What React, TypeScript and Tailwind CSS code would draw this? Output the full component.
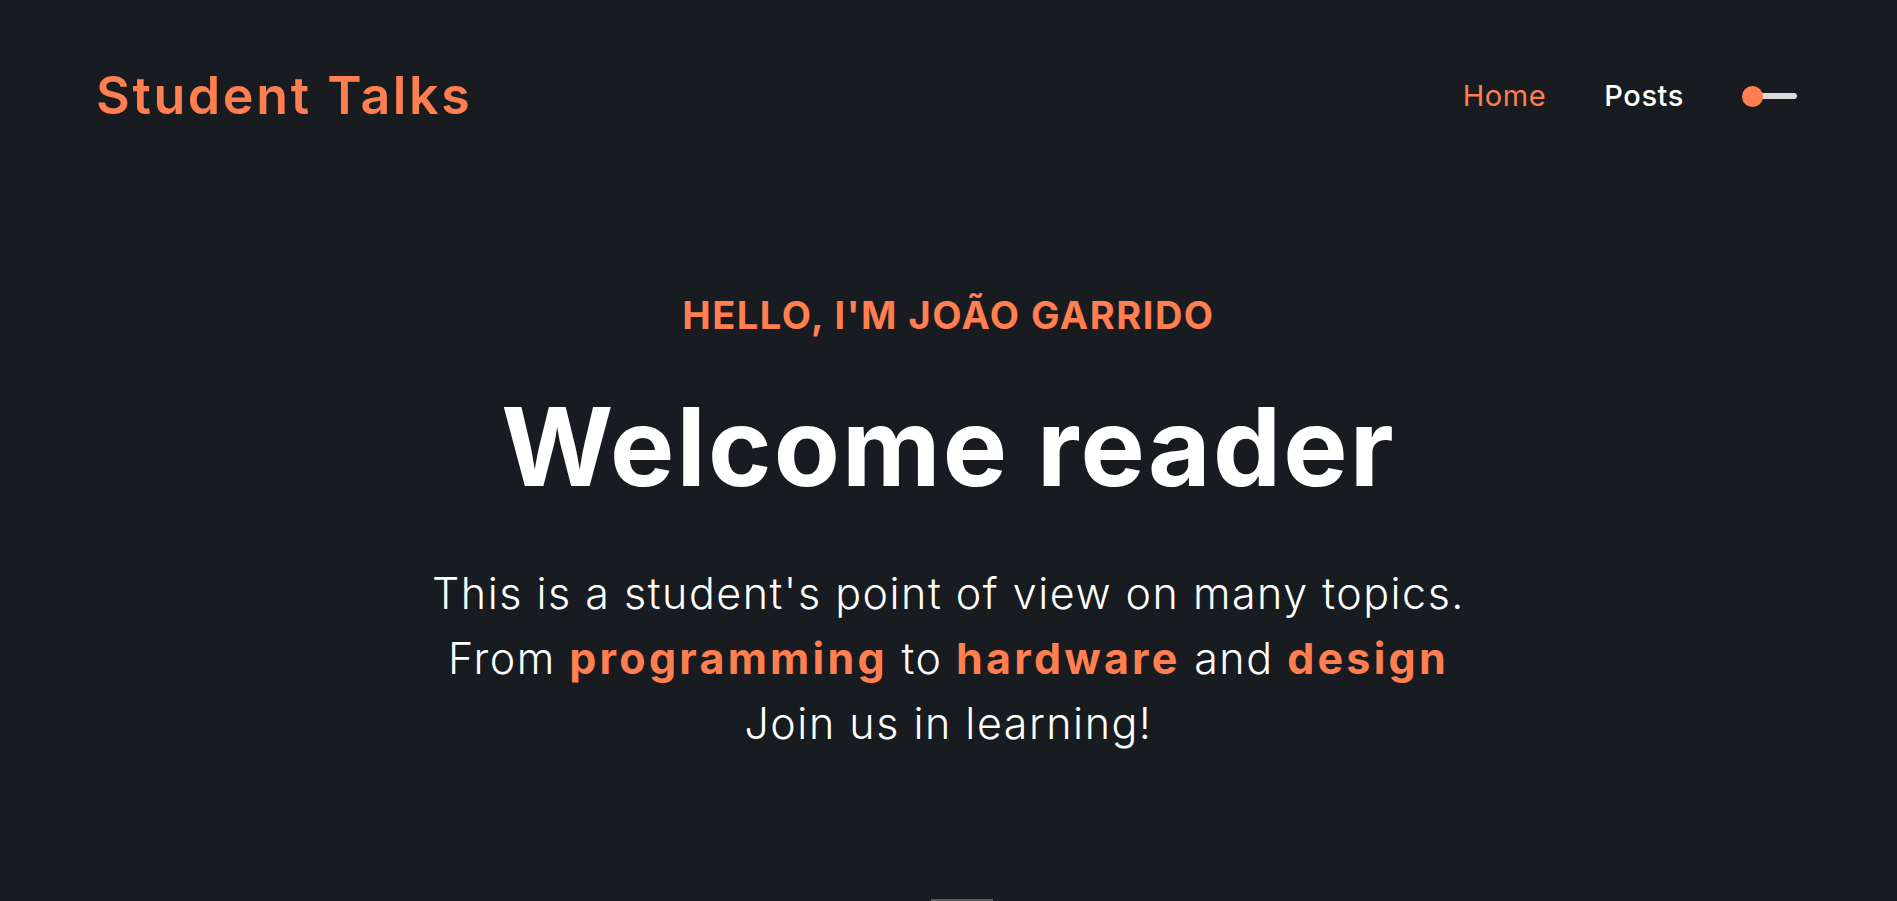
import React from "react";

const font = { fontFamily: "Inter, 'Noto Sans', sans-serif" };

export default function App() {
  return (
    <div
      className="h-screen w-full overflow-hidden bg-[#181b1f] text-white flex flex-col"
      style={font}
    >
      <header className="flex items-center justify-between h-[192px] pl-[96px] pr-[100px]">
        <a className="text-[52px] font-semibold tracking-[0.05em] text-[#ff7f50] leading-none">
          Student Talks
        </a>
        <nav className="flex items-center gap-[58px] text-[29px] tracking-[0.02em]">
          <a className="text-[#ff7f50]">Home</a>
          <a className="text-white font-medium">Posts</a>
          <button className="relative flex items-center w-[55px] h-[22px]">
            <span className="absolute left-[10px] right-0 h-[6px] rounded-full bg-[#d9d9d9]"></span>
            <span className="absolute left-0 w-[21px] h-[21px] rounded-full bg-[#ff7f50]"></span>
          </button>
        </nav>
      </header>

      <main className="flex-1 flex flex-col items-center text-center pt-[99px]">
        <h2 className="text-[38px] font-bold uppercase tracking-[0.04em] text-[#ff7f50] leading-[48px]">
          Hello, I'm João Garrido
        </h2>
        <h1 className="mt-[48px] text-[108px] font-bold leading-[120px] tracking-[0.02em]">
          Welcome reader
        </h1>
        <p className="mt-[54px] text-[43px] font-light leading-[65px] tracking-[0.035em]">
          This is a student's point of view on many topics.
          <br />
          From{" "}
          <strong className="font-bold tracking-[0.075em] text-[#ff7f50]">programming</strong>{" "}
          to{" "}
          <strong className="font-bold tracking-[0.075em] text-[#ff7f50]">hardware</strong>{" "}
          and{" "}
          <strong className="font-bold tracking-[0.075em] text-[#ff7f50]">design</strong>
          <br />
          Join us in learning!
        </p>
      </main>

      <div className="flex justify-center pl-[26px]">
        <div className="w-[62px] h-[2px] bg-[#5a5c60]"></div>
      </div>
    </div>
  );
}
